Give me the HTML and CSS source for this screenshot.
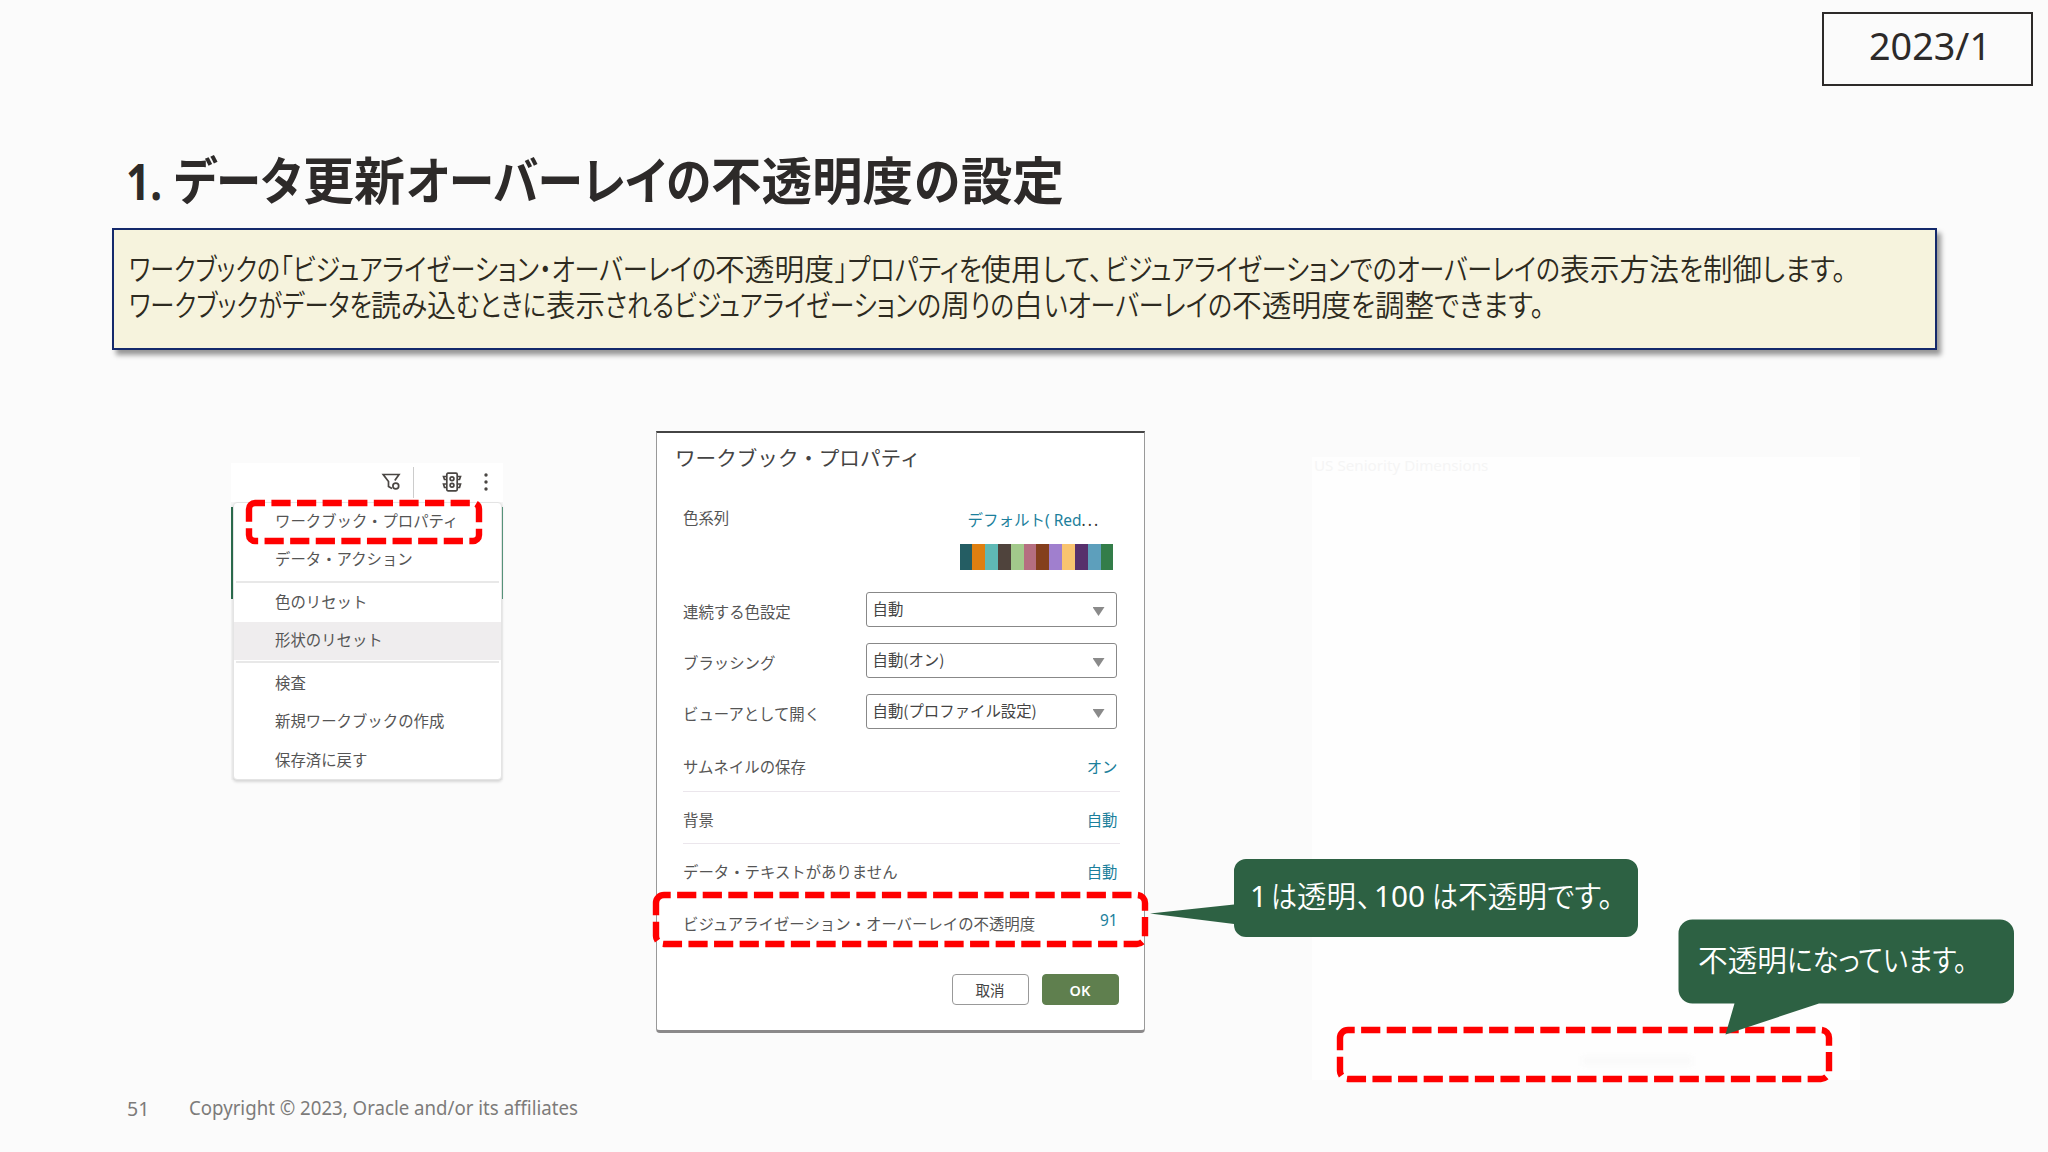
FILE: index.html
```html
<!DOCTYPE html>
<html lang="ja">
<head>
<meta charset="utf-8">
<title>データ更新オーバーレイの不透明度の設定</title>
<link rel="stylesheet" href="styles.css">
</head>
<body>
<main class="slide">
  <div class="date"><svg width="208" height="70"><text x="45" y="46" textLength="122" lengthAdjust="spacingAndGlyphs">2023/1</text></svg></div>

  <h1 class="title"><svg width="960" height="70"><text y="51"><tspan class="latin" x="-1" textLength="36" lengthAdjust="spacingAndGlyphs">1.</tspan><tspan x="47" textLength="128" lengthAdjust="spacingAndGlyphs">データ</tspan><tspan x="176" textLength="102" lengthAdjust="spacingAndGlyphs">更新</tspan><tspan x="279" textLength="305" lengthAdjust="spacingAndGlyphs">オーバーレイの</tspan><tspan x="584" textLength="202" lengthAdjust="spacingAndGlyphs">不透明度</tspan><tspan x="787" textLength="46" lengthAdjust="spacingAndGlyphs">の</tspan><tspan x="834" textLength="103" lengthAdjust="spacingAndGlyphs">設定</tspan></text></svg></h1>

  <section class="note">
    <svg width="1760" height="80">
      <text y="26"><tspan x="0" textLength="151" lengthAdjust="spacingAndGlyphs">ワークブックの</tspan><tspan x="151" textLength="436" lengthAdjust="spacingAndGlyphs">「ビジュアライゼーション・オーバーレイの</tspan><tspan x="586" textLength="119" lengthAdjust="spacingAndGlyphs">不透明度</tspan><tspan x="706" textLength="147" lengthAdjust="spacingAndGlyphs">」プロパティを</tspan><tspan x="852" textLength="60" lengthAdjust="spacingAndGlyphs">使用</tspan><tspan x="913" textLength="61" lengthAdjust="spacingAndGlyphs">して、</tspan><tspan x="976" textLength="455" lengthAdjust="spacingAndGlyphs">ビジュアライゼーションでのオーバーレイの</tspan><tspan x="1431" textLength="119" lengthAdjust="spacingAndGlyphs">表示方法</tspan><tspan x="1550" textLength="24" lengthAdjust="spacingAndGlyphs">を</tspan><tspan x="1574" textLength="59" lengthAdjust="spacingAndGlyphs">制御</tspan><tspan x="1633" textLength="84" lengthAdjust="spacingAndGlyphs">します。</tspan></text>
      <text y="62"><tspan x="0" textLength="243" lengthAdjust="spacingAndGlyphs">ワークブックがデータを</tspan><tspan x="242" textLength="30" lengthAdjust="spacingAndGlyphs">読</tspan><tspan x="272" textLength="26" lengthAdjust="spacingAndGlyphs">み</tspan><tspan x="298" textLength="29" lengthAdjust="spacingAndGlyphs">込</tspan><tspan x="327" textLength="90" lengthAdjust="spacingAndGlyphs">むときに</tspan><tspan x="417" textLength="59" lengthAdjust="spacingAndGlyphs">表示</tspan><tspan x="476" textLength="336" lengthAdjust="spacingAndGlyphs">されるビジュアライゼーションの</tspan><tspan x="812" textLength="29" lengthAdjust="spacingAndGlyphs">周</tspan><tspan x="841" textLength="44" lengthAdjust="spacingAndGlyphs">りの</tspan><tspan x="885" textLength="29" lengthAdjust="spacingAndGlyphs">白</tspan><tspan x="915" textLength="188" lengthAdjust="spacingAndGlyphs">いオーバーレイの</tspan><tspan x="1103" textLength="119" lengthAdjust="spacingAndGlyphs">不透明度</tspan><tspan x="1222" textLength="24" lengthAdjust="spacingAndGlyphs">を</tspan><tspan x="1246" textLength="59" lengthAdjust="spacingAndGlyphs">調整</tspan><tspan x="1305" textLength="110" lengthAdjust="spacingAndGlyphs">できます。</tspan></text>
    </svg>
  </section>

  <section class="figures">
    <div class="menu-shot">
      <div class="toolbar">
        <svg class="ic-filter" width="19" height="18" viewBox="0 0 19 18"><path d="M10 15.500L6.500 13.500V8.500L1.200 1.500H17L12.800 7.500"/><circle cx="13.800" cy="13" r="2.900"/></svg>
        <span class="bar"></span>
        <svg class="ic-signal" width="20" height="20" viewBox="0 0 20 20"><rect x="4.800" y="1.200" width="10.400" height="17.600" rx="1.200"/><circle cx="10" cy="6.700" r="1.900"/><circle cx="10" cy="13.200" r="1.900"/><path d="M5 4.500H1.500L2.500 7.500H5M5 12H1.500L2.500 15.500H5M15 4.500H18.500L17.500 7.500H15M15 12H18.500L17.500 15.500H15"/></svg>
        <svg class="ic-more" width="4" height="18" viewBox="0 0 4 18"><circle cx="2" cy="2" r="1.7"/><circle cx="2" cy="9" r="1.7"/><circle cx="2" cy="16" r="1.7"/></svg>
      </div>
      <div class="menu-frame">
        <ul class="menu">
          <li>ワークブック・プロパティ</li>
          <li>データ・アクション</li>
          <li class="sep"></li>
          <li>色のリセット</li>
          <li class="hover">形状のリセット</li>
          <li class="sep sep2"></li>
          <li>検査</li>
          <li>新規ワークブックの作成</li>
          <li>保存済に戻す</li>
        </ul>
      </div>
    </div>

    <div class="dialog">
      <h2>ワークブック・プロパティ</h2>
      <div class="row palette">
        <span>色系列</span>
        <div class="scheme">
          <div class="link">デフォルト( Red<span class="dots">...</span></div>
          <div class="swatches"><i class="c1"></i><i class="c2"></i><i class="c3"></i><i class="c4"></i><i class="c5"></i><i class="c6"></i><i class="c7"></i><i class="c8"></i><i class="c9"></i><i class="c10"></i><i class="c11"></i><i class="c12"></i></div>
        </div>
      </div>
      <div class="row pick"><span>連続する色設定</span><div class="select">自動<b></b></div></div>
      <div class="row pick"><span>ブラッシング</span><div class="select">自動(オン)<b></b></div></div>
      <div class="row pick"><span>ビューアとして開く</span><div class="select">自動(プロファイル設定)<b></b></div></div>
      <div class="row val v1"><span>サムネイルの保存</span><span class="link">オン</span></div>
      <div class="row val v2"><span>背景</span><span class="link">自動</span></div>
      <div class="row val v3"><span>データ・テキストがありません</span><span class="link">自動</span></div>
      <div class="row val v4"><span>ビジュアライゼーション・オーバーレイの不透明度</span><span class="link num">91</span></div>
      <div class="buttons"><button>取消</button><button class="ok">OK</button></div>
    </div>

    <div class="canvas"><span class="ghost">US Seniority Dimensions</span><span class="smudge"></span></div>
  </section>

  <footer><span class="page">51</span><svg width="400" height="30"><text x="0" y="20" textLength="389" lengthAdjust="spacingAndGlyphs">Copyright © 2023, Oracle and/or its affiliates</text></svg></footer>

  <svg class="marks" width="2048" height="1152">
    <g class="dash">
      <path d="M249 509a6 6 0 0 1 6-6H473a6 6 0 0 1 6 6V535a6 6 0 0 1-6 6H255a6 6 0 0 1-6-6Z"/>
      <path d="M656 903a8 8 0 0 1 8-8H1137a8 8 0 0 1 8 8V936a8 8 0 0 1-8 8H664a8 8 0 0 1-8-8Z"/>
      <path d="M1340 1038a8 8 0 0 1 8-8H1821a8 8 0 0 1 8 8V1071a8 8 0 0 1-8 8H1348a8 8 0 0 1-8-8Z"/>
    </g>
    <g class="callout">
      <path d="M1246 859H1626a12 12 0 0 1 12 12V925a12 12 0 0 1-12 12H1246a12 12 0 0 1-12-12V924L1150 913.500L1234 904.500V871a12 12 0 0 1 12-12Z"/>
      <path d="M1692.500 919.500H2000a14 14 0 0 1 14 14V989.500a14 14 0 0 1-14 14H1819L1725.500 1034.500L1734.500 1003.500H1692.500a14 14 0 0 1-14-14V933.500a14 14 0 0 1 14-14Z"/>
      <text y="907"><tspan class="latin" x="1250" textLength="17" lengthAdjust="spacingAndGlyphs">1</tspan><tspan x="1271" textLength="26" lengthAdjust="spacingAndGlyphs">は</tspan><tspan x="1297" textLength="59" lengthAdjust="spacingAndGlyphs">透明</tspan><tspan x="1357" textLength="14" lengthAdjust="spacingAndGlyphs">、</tspan><tspan class="latin" x="1374" textLength="51" lengthAdjust="spacingAndGlyphs">100</tspan><tspan x="1432" textLength="26" lengthAdjust="spacingAndGlyphs">は</tspan><tspan x="1458" textLength="89" lengthAdjust="spacingAndGlyphs">不透明</tspan><tspan x="1547" textLength="66" lengthAdjust="spacingAndGlyphs">です。</tspan></text>
      <text y="971"><tspan x="1698" textLength="89" lengthAdjust="spacingAndGlyphs">不透明</tspan><tspan x="1787" textLength="180" lengthAdjust="spacingAndGlyphs">になっています。</tspan></text>
    </g>
  </svg>
</main>
</body>
</html>
```
FILE: styles.css
```css
* { box-sizing: border-box; }
body {
  margin: 0;
  background: #fbfbfb;
  color: #2d2a29;
  font-family: "Noto Sans", "Noto Sans CJK JP", sans-serif;
}
svg { display: block; overflow: visible; }
.slide {
  position: relative;
  width: 2048px;
  height: 1152px;
  padding-top: 12px;
  display: flex;
  flex-direction: column;
  overflow: hidden;
}
.date {
  align-self: flex-end;
  width: 211px;
  height: 74px;
  margin-right: 15px;
  border: 2px solid #2d2a29;
}
.date text { font-size: 38px; fill: #2d2a29; }
.title { margin: 63px 0 0 127px; height: 79px; font-size: 51px; }
.title text {
  font: 700 51px "Noto Sans CJK JP", sans-serif;
  font-feature-settings: "palt";
  fill: #2d2a29;
}
.title .latin { font: 700 50px "Noto Sans", sans-serif; }
.note {
  width: 1825px;
  height: 122px;
  margin-left: 112px;
  padding: 24px 0 0 15px;
  background: #f6f3dd;
  border: 2px solid #14296b;
  box-shadow: 4px 5px 5px rgba(0, 0, 0, .4);
}
.note text, .callout text {
  font: 350 30px "Noto Sans CJK JP", sans-serif;
  font-feature-settings: "palt";
  fill: #2d2a20;
}
.figures {
  display: flex;
  align-items: flex-start;
  height: 730px;
  padding-top: 81px;
}

.menu-shot {
  width: 272px;
  margin: 32px 0 0 231px;
  background: #fff;
  color: #555;
  font: 15.4px "Noto Sans CJK JP", sans-serif;
}
.toolbar { display: flex; align-items: center; height: 39px; padding: 0 15px 1px 151px; }
.toolbar svg { flex: none; fill: none; stroke: #4a4643; stroke-width: 1.7; }
.toolbar .ic-more { fill: #4a4643; stroke: none; margin-left: 22px; }
.bar { width: 2px; height: 31px; background: #ccc; margin: 0 28px 0 12px; }
.menu-frame {
  background:
    linear-gradient(#2c6e4f, #2c6e4f) 0 5px / 2px 92px no-repeat,
    linear-gradient(#5b9a80, #5b9a80) 100% 5px / 2px 92px no-repeat,
    #f5f5f5;
}
.menu {
  list-style: none;
  margin: 0 1px 0 2px;
  padding: 0;
  height: 278px;
  background: #fff;
  border: 1px solid #e4e4e4;
  border-radius: 4px;
  box-shadow: 0 2px 3px rgba(0, 0, 0, .15);
}
.menu li { height: 38.3px; line-height: 34px; padding-left: 41px; white-space: nowrap; }
.menu li.sep { height: 2px; margin: 1px 2px; background: #e8e8e8; }
.menu li.sep2 { margin: 1px 2px 2px; }
.menu li.hover { background: #efedee; line-height: 35px; }

.dialog {
  width: 489px;
  height: 602px;
  margin-left: 153px;
  padding: 7px 27.500px 0 26px;
  background: #fff;
  border: 1px solid #999;
  border-top: 2px solid #444;
  border-bottom: 3px solid #8b898a;
  border-radius: 0 0 4px 4px;
  color: #555;
  font: 15.4px "Noto Sans CJK JP", sans-serif;
}
.dialog h2 { margin: 0 0 0 -8px; font-size: 20.600px; line-height: 34px; font-weight: 400; color: #444; }
.row { display: flex; justify-content: space-between; white-space: nowrap; }
.palette { margin-top: 32px; height: 84px; line-height: 22px; }
.scheme { padding: 4px 3px 0 0; }
.link { color: #1c7f9c; }
.scheme .link { margin-left: 8px; height: 24px; font: 15.5px/20px "Noto Sans", "Noto Sans CJK JP", sans-serif; }
.dots { color: #333; letter-spacing: 2px; }
.swatches { display: flex; width: 154px; height: 26px; margin-top: 10px; }
.swatches i { flex: 1; }
.c1 { background: #245d63; } .c2 { background: #de7f11; } .c3 { background: #5fb9b5; } .c4 { background: #4f433c; }
.c5 { background: #a2c98b; } .c6 { background: #b56e80; } .c7 { background: #843f1d; } .c8 { background: #a07fce; }
.c9 { background: #f9c470; } .c10 { background: #57306c; } .c11 { background: #5d9fbc; } .c12 { background: #337d49; }
.pick { height: 35px; line-height: 43px; margin-bottom: 16px; }
.select {
  display: flex;
  justify-content: space-between;
  width: 251px;
  height: 35px;
  margin-top: 2px;
  padding: 0 11px 0 6px;
  line-height: 31px;
  border: 1.500px solid #888;
  border-radius: 3px;
  color: #444;
}
.select b { margin-top: 14px; width: 12px; height: 9px; background: #8a8a8a; clip-path: polygon(0 0, 100% 0, 50% 100%); }
.val { align-items: center; margin-right: -3px; padding-right: 2px; }
.v1 { height: 50px; margin-top: -1px; padding-bottom: 2px; border-bottom: 1px solid #ebe6ec; }
.v2 { height: 52px; padding-top: 3px; border-bottom: 1px solid #ebe6ec; }
.v3 { height: 52px; padding-top: 1px; }
.v4 { height: 53px; }
.num { font-family: "Noto Sans", sans-serif; margin-top: -4px; }
.buttons { display: flex; justify-content: flex-end; gap: 13px; margin: 25px -2px 0 0; }
.buttons button {
  width: 77px;
  height: 31px;
  padding: 0;
  background: #fff;
  border: 1.500px solid #999;
  border-radius: 4px;
  color: #444;
  font: 14.500px/26px "Noto Sans CJK JP", sans-serif;
}
.buttons .ok { background: #5f7f4e; border-color: #5f7f4e; color: #fff; font: 600 14.500px/28px "Noto Sans", sans-serif; }

.canvas {
  display: flex;
  flex-direction: column;
  justify-content: space-between;
  width: 548px;
  height: 623px;
  margin: 26px 0 0 167px;
  background: #fefefe;
}
.ghost { margin-left: 2px; font: 15.2px/17px "Noto Sans", sans-serif; color: #f5f5f5; }
.smudge { width: 110px; height: 10px; margin: 0 0 14px 270px; background: #fafafa; filter: blur(2px); }

footer { display: flex; padding-left: 127px; margin-top: 15px; color: #7d7b7a; }
footer .page { width: 62px; font-size: 19.500px; line-height: 27px; }
footer text { font-size: 19px; fill: #7d7b7a; }

.marks { position: absolute; left: 0; top: 0; }
.dash path { fill: none; stroke: #f00; stroke-width: 6.4; stroke-dasharray: 19.200 6.400; }
.callout path { fill: #2d6143; }
.callout text { fill: #fff; }
.callout .latin { font: 29px "Noto Sans", sans-serif; }
```
